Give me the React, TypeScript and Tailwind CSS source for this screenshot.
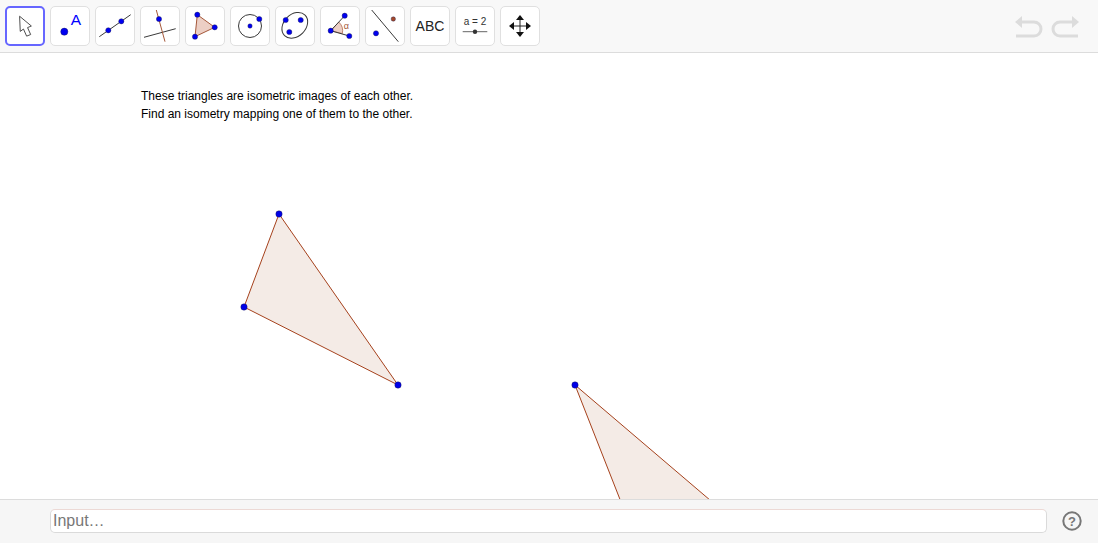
const BLUE = "#0000f0";
const BROWN = "#a5583a";
const DARK = "#3a3a3a";

function Pt({ x, y, r = 2.6, fill = BLUE }: { x: number; y: number; r?: number; fill?: string }) {
  return <circle cx={x} cy={y} r={r} fill={fill} stroke="#1a1a4a" strokeWidth={0.4} />;
}

function Icon({ children }: { children: React.ReactNode }) {
  return (
    <svg width="38" height="38" viewBox="1 1 38 38" className="block">
      {children}
    </svg>
  );
}

function Tool({ children, active = false }: { children: React.ReactNode; active?: boolean }) {
  return (
    <button
      type="button"
      className={
        active
          ? "w-10 h-10 shrink-0 flex items-center justify-center bg-white rounded-[5px] border-2 border-[#6666ff]"
          : "w-10 h-10 shrink-0 flex items-center justify-center bg-white rounded-[5px] border border-[#e0e0e0]"
      }
    >
      {children}
    </button>
  );
}

const tools = [
  <Icon>
    <path d="M14.3 9.7 L15 25.7 L18.4 23.2 L21.7 30.7 L26 29 L22.7 21.7 L26.7 20 Z" fill="#fff" stroke="#444" strokeWidth="1" strokeLinejoin="round" />
  </Icon>,
  <Icon>
    <Pt x={14.3} y={25.7} r={3.6} />
    <text x={26} y={19.2} textAnchor="middle" fontSize="15.5" fill="#0000ff" fontFamily="Liberation Sans, sans-serif">A</text>
  </Icon>,
  <Icon>
    <line x1={4.3} y1={30.7} x2={35.7} y2={8.7} stroke={DARK} strokeWidth="1" />
    <Pt x={13.3} y={24.3} />
    <Pt x={26.3} y={15.3} />
  </Icon>,
  <Icon>
    <line x1={4} y1={31.3} x2={35.7} y2={22.7} stroke={DARK} strokeWidth="1" />
    <line x1={16.3} y1={4} x2={25} y2={35.7} stroke={BROWN} strokeWidth="1" />
    <Pt x={19} y={13} />
  </Icon>,
  <Icon>
    <polygon points="12.3,8.7 29.7,21.3 10,30.7" fill="#eccfc5" stroke={BROWN} strokeWidth="1" />
    <Pt x={12.3} y={8.7} />
    <Pt x={29.7} y={21.3} />
    <Pt x={10} y={30.7} />
  </Icon>,
  <Icon>
    <circle cx={20} cy={20} r={11.5} fill="none" stroke={DARK} strokeWidth="1" />
    <Pt x={20} y={20} r={2.2} />
    <Pt x={29.3} y={13} />
  </Icon>,
  <Icon>
    <ellipse cx={19.8} cy={19.3} rx={14.5} ry={11} transform="rotate(-45 19.8 19.3)" fill="none" stroke={DARK} strokeWidth="1" />
    <Pt x={10.7} y={14} />
    <Pt x={25.7} y={14} />
    <Pt x={14.3} y={26} />
  </Icon>,
  <Icon>
    <path d="M10.7 24.7 L18.8 16.1 A12 12 0 0 1 22.3 27.6 Z" fill="#eccfc5" stroke={BROWN} strokeWidth="0.7" />
    <line x1={10.7} y1={24.7} x2={24.7} y2={9.7} stroke={DARK} strokeWidth="1" />
    <line x1={10.7} y1={24.7} x2={29.3} y2={30} stroke={DARK} strokeWidth="1" />
    <Pt x={10.7} y={24.7} />
    <Pt x={24.7} y={9.7} />
    <Pt x={29.3} y={30} />
    <text x={26.3} y={23} textAnchor="middle" fontSize="9" fill={BROWN} fontFamily="Liberation Sans, sans-serif">α</text>
  </Icon>,
  <Icon>
    <line x1={6.7} y1={4} x2={33.3} y2={35.7} stroke={DARK} strokeWidth="1" />
    <Pt x={11} y={27.3} />
    <Pt x={28.3} y={13} r={2.2} fill="#a5482a" />
  </Icon>,
  <span className="font-['Liberation_Sans',sans-serif] text-[14px] text-[#222] leading-none">ABC</span>,
  <Icon>
    <text x={20} y={19} textAnchor="middle" fontSize="10" fill="#333" fontFamily="Liberation Sans, sans-serif">a = 2</text>
    <line x1={7.7} y1={25.7} x2={32.3} y2={25.7} stroke="#666" strokeWidth="1" />
    <circle cx={20} cy={25.7} r={2.2} fill="#333" />
  </Icon>,
  <Icon>
    <line x1={12} y1={20} x2={28} y2={20} stroke="#222" strokeWidth="1" />
    <line x1={20} y1={12} x2={20} y2={28} stroke="#222" strokeWidth="1" />
    <polygon points="9,20 14,16 14,24" fill="#111" />
    <polygon points="31,20 26,16 26,24" fill="#111" />
    <polygon points="20,9 16,14 24,14" fill="#111" />
    <polygon points="20,31 16,26 24,26" fill="#111" />
  </Icon>,
];

export default function App() {
  return (
    <div className="w-[1098px] h-[543px] flex flex-col bg-white overflow-hidden font-['Liberation_Sans',sans-serif]">
      <header className="h-[53px] shrink-0 flex items-start pl-[5px] pt-[6px] gap-[5px] bg-[#f8f8f8] border-b border-[#dcdcdc]">
        {tools.map((t, i) => (
          <Tool key={i} active={i === 0}>
            {t}
          </Tool>
        ))}
        <div className="ml-auto flex gap-[8px] pr-[19px] pt-[8px]">
          <svg width="28" height="24" viewBox="0 0 28 24" className="block">
            <path d="M6 8 H19 A7 7 0 0 1 19 22 H1" fill="none" stroke="#dcdcdc" strokeWidth="3" />
            <polygon points="0,8 7,2 7,14" fill="#dcdcdc" />
          </svg>
          <svg width="28" height="24" viewBox="0 0 28 24" className="block">
            <path d="M22 8 H9 A7 7 0 0 0 9 22 H27" fill="none" stroke="#dcdcdc" strokeWidth="3" />
            <polygon points="28,8 21,2 21,14" fill="#dcdcdc" />
          </svg>
        </div>
      </header>

      <main className="relative flex-1 min-h-0 overflow-hidden bg-white">
        <div className="absolute left-[141px] top-[34px] text-[12px] leading-[18px] text-black whitespace-nowrap">
          <div>These triangles are isometric images of each other.</div>
          <div>Find an isometry mapping one of them to the other.</div>
        </div>
        <svg className="absolute inset-0 block" width="1098" height="446" viewBox="0 53 1098 446">
          <polygon points="279,214 244,307 398,385" fill="#f4ebe6" stroke="#a5411c" strokeWidth="1" />
          <polygon points="575,385 634,535 751,535" fill="#f4ebe6" stroke="#a5411c" strokeWidth="1" />
          <Pt x={279} y={214} r={3.2} fill="#0000e8" />
          <Pt x={244} y={307} r={3.2} fill="#0000e8" />
          <Pt x={398} y={385} r={3.2} fill="#0000e8" />
          <Pt x={575} y={385} r={3.2} fill="#0000e8" />
        </svg>
      </main>

      <footer className="h-[44px] shrink-0 flex items-start pl-[50px] pt-[9px] gap-[15px] bg-[#f6f6f6] border-t border-[#dcdcdc]">
        <input
          placeholder="Input…"
          className="w-[997px] h-6 shrink-0 bg-white rounded-[5px] border border-[#dadada] border-t-[#ecd9d5] px-[2px] text-[16px] outline-none placeholder:text-[#777]"
        />
        <svg width="20" height="20" viewBox="0 0 20 20" className="block shrink-0 mt-[2px]">
          <circle cx="10" cy="10" r="8.7" fill="none" stroke="#777" strokeWidth="2" />
          <text x="10" y="14.5" textAnchor="middle" fontSize="13" fontWeight="700" fill="#777" fontFamily="Liberation Sans, sans-serif">?</text>
        </svg>
      </footer>
    </div>
  );
}
